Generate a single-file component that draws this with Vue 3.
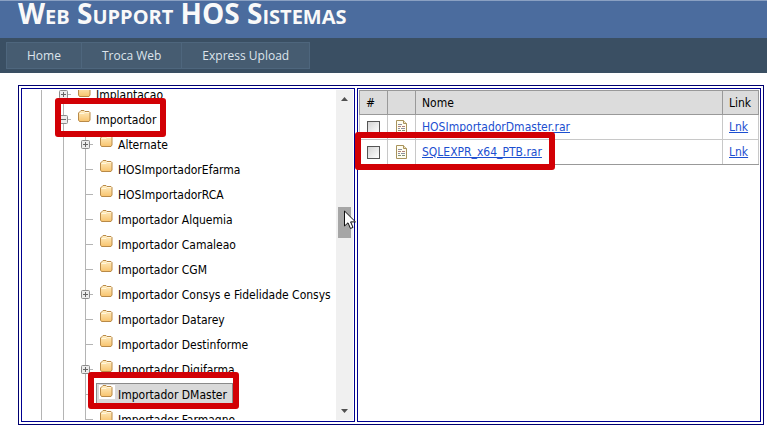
<script setup>
import { computed, ref } from 'vue'

const menu = ['Home', 'Troca Web', 'Express Upload']

const selected = ref('Importador DMaster')

const nodes = ref([
    { name: 'Implantacao', depth: 2, expander: '+' },
    { name: 'Importador', depth: 2, expander: '-', mark: 'mark-parent' },
    { name: 'Alternate', depth: 3, expander: '+' },
    { name: 'HOSImportadorEfarma', depth: 3 },
    { name: 'HOSImportadorRCA', depth: 3 },
    { name: 'Importador Alquemia', depth: 3 },
    { name: 'Importador Camaleao', depth: 3 },
    { name: 'Importador CGM', depth: 3 },
    { name: 'Importador Consys e Fidelidade Consys', depth: 3, expander: '+' },
    { name: 'Importador Datarey', depth: 3 },
    { name: 'Importador Destinforme', depth: 3 },
    { name: 'Importador Digifarma', depth: 3, expander: '+' },
    { name: 'Importador DMaster', depth: 3, mark: 'mark-child' },
    { name: 'Importador Farmagno', depth: 3 }
])

const files = ref([
    { name: 'HOSImportadorDmaster.rar', checked: false },
    { name: 'SQLEXPR_x64_PTB.rar', checked: false, mark: true }
])

const open = ref(true)

// children are hidden when the parent folder is closed
const visibleNodes = computed(() => nodes.value.filter(node => open.value || node.depth < 3))

function toggle(node) {
    if (node.name === 'Importador') {
        open.value = !open.value
        node.expander = open.value ? '-' : '+'
    }
}
</script>

<template>
    <header class="header">
        <h1>Web Support HOS Sistemas</h1>
    </header>

    <nav class="menu">
        <a v-for="item in menu" :key="item" href="#">{{ item }}</a>
    </nav>

    <main class="panels">
        <section class="panel tree-panel">
            <ul class="tree">
                <li v-for="node in visibleNodes" :key="node.name" class="node">
                    <span v-for="n in node.depth - 1" :key="n" class="guide"></span>
                    <span class="guide tick">
                        <button v-if="node.expander" class="expander" type="button" :aria-label="'Expandir ' + node.name" @click="toggle(node)">
                            <svg width="9" height="9" viewBox="0 0 9 9">
                                <rect x="0.5" y="0.5" width="8" height="8" rx="1" fill="#ececec" stroke="#8c8c8c" />
                                <path d="M2 4.5h5" stroke="#666" />
                                <path v-if="node.expander === '+'" d="M4.5 2v5" stroke="#666" />
                            </svg>
                        </button>
                    </span>
                    <a href="#" class="node-link" :class="{ selected: node.name === selected }" @click.prevent="selected = node.name">
                        <svg class="folder" width="16" height="14" viewBox="0 0 16 14">
                            <defs>
                                <linearGradient id="folderFill" x1="0" y1="0" x2="0" y2="1">
                                    <stop offset="0" stop-color="#ffeec4" />
                                    <stop offset="1" stop-color="#f8c36c" />
                                </linearGradient>
                            </defs>
                            <rect v-if="node.name === selected" width="16" height="14" fill="#fff" />
                            <path d="M1.5 10 V3 L3 1.5 L4 0.5 H7 L8 1.5 H12 L13 2.5 V10 L12 11.5 H2.5Z" fill="url(#folderFill)" stroke="#b98a48" />
                            <path d="M2.5 3.5 H7 L8 2.5 H12" fill="none" stroke="#fff6dc" />
                        </svg>
                        <span>{{ node.name }}</span>
                    </a>
                    <span v-if="node.mark" class="mark" :class="node.mark"></span>
                </li>
            </ul>
            <div class="scrollbar">
                <svg width="7" height="4" viewBox="0 0 7 4"><path d="M0 4 L3.5 0 L7 4Z" fill="#505050" /></svg>
                <div class="thumb"></div>
                <svg width="7" height="4" viewBox="0 0 7 4"><path d="M0 0 L3.5 4 L7 0Z" fill="#505050" /></svg>
            </div>
            <svg class="cursor" width="13" height="20" viewBox="0 0 13 20">
                <path d="M0.5 1 V16 L4 12.8 L6.5 18.5 L9 17.4 L6.6 11.9 H11.5Z" fill="#fff" stroke="#111" />
            </svg>
        </section>

        <section class="panel">
            <table class="files">
                <thead>
                    <tr>
                        <th class="col-check">#</th>
                        <th class="col-icon"></th>
                        <th>Nome</th>
                        <th class="col-link">Link</th>
                    </tr>
                </thead>
                <tbody>
                    <tr v-for="file in files" :key="file.name">
                        <td class="check-cell">
                            <input v-model="file.checked" type="checkbox" :aria-label="file.name">
                            <span v-if="file.mark" class="mark mark-file"></span>
                        </td>
                        <td>
                            <svg class="doc" width="12" height="14" viewBox="0 0 12 14">
                                <path d="M0.5 0.5 H7.5 L10.5 3.5 V13.5 H0.5Z" fill="#fffdf0" stroke="#a8935c" />
                                <path d="M7.5 0.5 V3.5 H10.5" fill="#f0e4bd" stroke="#a8935c" />
                                <path d="M2 4.5h4M2 8.5h2M5 8.5h4" stroke="#8c90a0" />
                                <path d="M2 6.5h3M6 6.5h3" stroke="#b08078" />
                                <path d="M2 10.5h3M6 10.5h3" stroke="#809078" />
                            </svg>
                        </td>
                        <td><a href="#">{{ file.name }}</a></td>
                        <td><a href="#">Lnk</a></td>
                    </tr>
                </tbody>
            </table>
        </section>
    </main>
</template>

<style>
body {
    background: #fff;
}
</style>

<style scoped>
* {
    box-sizing: border-box;
}

.header {
    height: 38px;
    padding: 0 18px;
    background: #4b6c9e;
    border-top: 1px solid #8aa0c2;
}

h1 {
    margin: 0;
    color: #f9f9f9;
    font-family: "Open Sans", "Noto Sans", sans-serif;
    font-size: 28px;
    font-weight: 700;
    font-variant: small-caps;
    line-height: 24px;
    white-space: nowrap;
}

.menu {
    display: flex;
    padding: 4px 6px;
    background: #3a4f63;
}

.menu a {
    padding: 0 20px;
    border: 1px solid #4e667d;
    background: #465c71;
    color: #dde4ec;
    font-family: "Open Sans", "Noto Sans", sans-serif;
    font-size: 12px;
    line-height: 25px;
    text-decoration: none;
}

.menu a + a {
    border-left: 0;
}

.panels {
    display: grid;
    grid-template-columns: 334px 1fr;
    gap: 2px;
    margin: 12px 3px 3px 18px;
    padding: 2px;
    border: 1px solid #000070;
    font-family: "DejaVu Sans Condensed", "DejaVu Sans", sans-serif;
    font-size: 12px;
}

.panel {
    position: relative;
    padding: 1px;
    border: 1px solid #000090;
}

/* TREE */
.tree-panel {
    display: flex;
    height: 334px;
}

.tree {
    flex: 1;
    margin: 0;
    padding: 0 0 0 7px;
    overflow: hidden;
    list-style: none;
}

.node {
    position: relative;
    display: flex;
    height: 25px;
}

/* list is scrolled, first row is partly out of view */
.node:first-child {
    margin-top: -8px;
}

.guide {
    display: flex;
    flex: none;
    align-items: center;
    justify-content: center;
    width: 22px;
    background: linear-gradient(#b4b4b4, #b4b4b4) 11px 0 / 1px 100% no-repeat;
}

.tick {
    background: linear-gradient(#b4b4b4, #b4b4b4) 11px 0 / 1px 100% no-repeat,
        linear-gradient(#b4b4b4, #b4b4b4) 11px 12px / 8px 1px no-repeat;
}

.expander {
    display: flex;
    padding: 0 0 0 1px;
    border: 0;
    background: none;
    cursor: pointer;
}

.node-link {
    display: flex;
    align-self: center;
    gap: 3px;
    height: 23px;
    padding: 0 5px 0 2px;
    border: 1px solid transparent;
    color: #000;
    line-height: 22px;
    text-decoration: none;
    white-space: nowrap;
}

.node-link.selected {
    border-color: #8a8a8a;
    background: #d9d9d9;
}

.folder {
    flex: none;
    margin-top: 1px;
}

/* SCROLLBAR */
.scrollbar {
    display: flex;
    flex-direction: column;
    align-items: center;
    justify-content: space-between;
    width: 17px;
    padding: 7px 0;
    background: #f0f0f0;
}

.thumb {
    width: 13px;
    height: 31px;
    margin-bottom: 66px;
    background: #a6a6a6;
}

.cursor {
    position: absolute;
    top: 121px;
    left: 322px;
    z-index: 3;
}

/* FILES */
.files {
    width: 100%;
    border: 1px solid #999;
    border-collapse: collapse;
}

.files th,
.files td {
    height: 24px;
    padding: 0 6px;
    border: 1px solid #c8c8c8;
    line-height: 22px;
    text-align: left;
}

.files td {
    height: 25px;
}

.files tr:last-child td {
    border-bottom-color: #999;
}

.files th {
    border-color: #999;
    background: #dcdcdc;
    font-weight: 400;
}

.files a {
    color: #1c4fd0;
}

.col-check,
.col-icon {
    width: 28px;
}

.col-link {
    width: 36px;
}

.check-cell {
    position: relative;
}

.check-cell input {
    display: block;
    width: 13px;
    height: 13px;
    margin: 0 1px;
    border: 1px solid #555;
    background: linear-gradient(135deg, #d4d4d4, #fff);
    appearance: none;
}

.check-cell input:checked {
    background: #1c4fd0;
}

.doc {
    display: block;
    margin-left: 2px;
}

/* HIGHLIGHTS */
.mark {
    position: absolute;
    z-index: 2;
    border: 6px solid #d20005;
    border-radius: 3px;
    pointer-events: none;
}

.mark-parent {
    top: -9px;
    left: 25px;
    width: 111px;
    height: 39px;
}

.mark-child {
    top: -10px;
    left: 58px;
    width: 151px;
    height: 37px;
}

.mark-file {
    top: -8px;
    left: -5px;
    width: 200px;
    height: 38px;
}
</style>
